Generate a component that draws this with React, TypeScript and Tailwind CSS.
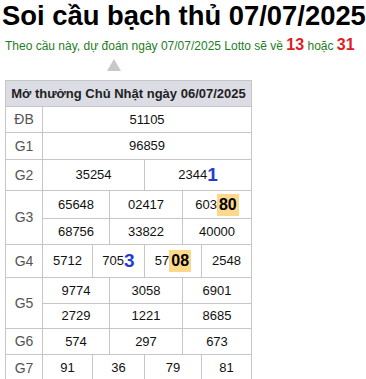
import React from 'react';

const font = { fontFamily: '"Liberation Sans", Arial, sans-serif' };

function Hl({ children }: { children: React.ReactNode }) {
  return (
    <span className="bg-[#fcd98a] px-[2px] py-[2px] text-[16px] font-bold leading-[18px] text-black">
      {children}
    </span>
  );
}

function Blue({ children }: { children: React.ReactNode }) {
  return <span className="text-[19px] font-bold leading-[20px] text-[#1f3fd3]">{children}</span>;
}

function Cell({ children, first }: { children: React.ReactNode; first?: boolean }) {
  return (
    <div
      className={`flex items-center justify-center text-[13px] text-[#111] ${first ? '' : 'border-l border-[#c6c6c6]'}`}
    >
      {children}
    </div>
  );
}

function Label({ text }: { text: string }) {
  return (
    <div className="flex w-[37px] shrink-0 items-center justify-center border-r border-[#c6c6c6] text-[14px] text-[#555]">
      {text}
    </div>
  );
}

export default function App() {
  return (
    <div className="h-[379px] w-[366px] overflow-hidden bg-white" style={font}>
      <h1 className="whitespace-nowrap pl-[2px] text-[27.4px] font-bold leading-[32px] text-black">
        Soi cầu bạch thủ 07/07/2025
      </h1>
      <p className="mt-[3px] whitespace-nowrap pl-[5px] text-[12px] leading-[20px] text-[#1e7d1e]">
        Theo cầu này, dự đoán ngày 07/07/2025 Lotto sẽ về{' '}
        <b className="text-[16px] text-[#e31b23]">13</b> hoặc{' '}
        <b className="text-[16px] text-[#e31b23]">31</b>
      </p>
      <div className="ml-[107px] mt-[3px] h-0 w-0 border-x-[7px] border-b-[12px] border-x-transparent border-b-[#c8c8c8]" />

      <div className="ml-[5px] mt-[9px] w-[247px] border-x border-b border-[#c6c6c6]">
        <div className="flex h-[26px] items-center justify-center border-t border-[#c6c6c6] bg-[#dcdce4] text-[13px] font-bold text-[#222]">
          Mở thưởng Chủ Nhật ngày 06/07/2025
        </div>

        <div className="flex h-[26px] border-t border-[#c6c6c6]">
          <Label text="ĐB" />
          <div className="grid flex-1 grid-cols-1">
            <Cell first>51105</Cell>
          </div>
        </div>

        <div className="flex h-[27px] border-t border-[#c6c6c6]">
          <Label text="G1" />
          <div className="grid flex-1 grid-cols-1">
            <Cell first>96859</Cell>
          </div>
        </div>

        <div className="flex h-[31px] border-t border-[#c6c6c6]">
          <Label text="G2" />
          <div className="grid flex-1 grid-cols-[101px_1fr]">
            <Cell first>35254</Cell>
            <Cell>
              2344<Blue>1</Blue>
            </Cell>
          </div>
        </div>

        <div className="flex h-[54px] border-t border-[#c6c6c6]">
          <Label text="G3" />
          <div className="flex flex-1 flex-col">
            <div className="grid h-[28px] grid-cols-[66px_73px_1fr]">
              <Cell first>65648</Cell>
              <Cell>02417</Cell>
              <Cell>
                603<Hl>80</Hl>
              </Cell>
            </div>
            <div className="grid h-[26px] grid-cols-[66px_73px_1fr] border-t border-[#c6c6c6]">
              <Cell first>68756</Cell>
              <Cell>33822</Cell>
              <Cell>40000</Cell>
            </div>
          </div>
        </div>

        <div className="flex h-[33px] border-t border-[#c6c6c6]">
          <Label text="G4" />
          <div className="grid flex-1 grid-cols-[49px_52px_57px_1fr]">
            <Cell first>5712</Cell>
            <Cell>
              705<Blue>3</Blue>
            </Cell>
            <Cell>
              57<Hl>08</Hl>
            </Cell>
            <Cell>2548</Cell>
          </div>
        </div>

        <div className="flex h-[51px] border-t border-[#c6c6c6]">
          <Label text="G5" />
          <div className="flex flex-1 flex-col">
            <div className="grid h-[26px] grid-cols-[66px_73px_1fr]">
              <Cell first>9774</Cell>
              <Cell>3058</Cell>
              <Cell>6901</Cell>
            </div>
            <div className="grid h-[25px] grid-cols-[66px_73px_1fr] border-t border-[#c6c6c6]">
              <Cell first>2729</Cell>
              <Cell>1221</Cell>
              <Cell>8685</Cell>
            </div>
          </div>
        </div>

        <div className="flex h-[26px] border-t border-[#c6c6c6]">
          <Label text="G6" />
          <div className="grid flex-1 grid-cols-[66px_73px_1fr]">
            <Cell first>574</Cell>
            <Cell>297</Cell>
            <Cell>673</Cell>
          </div>
        </div>

        <div className="flex h-[27px] border-t border-[#c6c6c6]">
          <Label text="G7" />
          <div className="grid flex-1 grid-cols-[49px_52px_57px_1fr]">
            <Cell first>91</Cell>
            <Cell>36</Cell>
            <Cell>79</Cell>
            <Cell>81</Cell>
          </div>
        </div>
      </div>
    </div>
  );
}
